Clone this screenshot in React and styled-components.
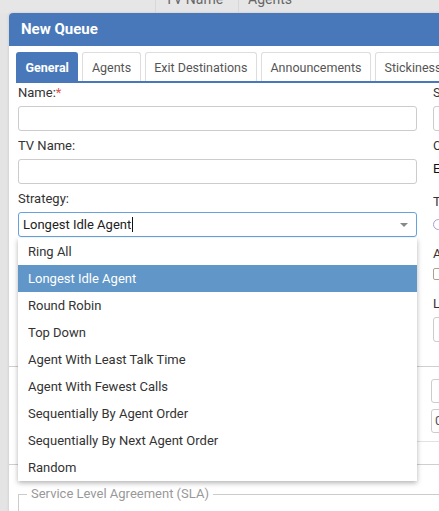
import React from "react";
import styled, { createGlobalStyle } from "styled-components";

const GlobalStyle = createGlobalStyle`
  html, body {
    margin: 0;
    padding: 0;
    background: #e4e4e4;
    overflow: hidden;
    font-family: Roboto, "Liberation Sans", Arial, sans-serif;
    font-size: 13px;
    color: #333;
  }
`;

const strategies = [
  "Ring All",
  "Longest Idle Agent",
  "Round Robin",
  "Top Down",
  "Agent With Least Talk Time",
  "Agent With Fewest Calls",
  "Sequentially By Agent Order",
  "Sequentially By Next Agent Order",
  "Random",
];

const tabs = ["General", "Agents", "Exit Destinations", "Announcements", "Stickiness"];

function App() {
  return (
    <>
      <GlobalStyle />
      <Backdrop>
        <HeadRow>
          <HeadCell $width={155} />
          <HeadCell $width={83}>TV Name</HeadCell>
          <HeadCell $width={200}>Agents</HeadCell>
        </HeadRow>
      </Backdrop>
      <Modal>
        <Header>New Queue</Header>
        <Body>
          <Tabs>
            {tabs.map((t, i) => (
              <Tab key={t} $active={i === 0}>
                {t}
              </Tab>
            ))}
          </Tabs>
          <FormGrid>
            <Column>
              <Field>
                <Label>
                  Name:<Required>*</Required>
                </Label>
                <Input />
              </Field>
              <Field>
                <Label>TV Name:</Label>
                <Input />
              </Field>
              <Field>
                <Label>Strategy:</Label>
                <SelectWrap>
                  <Select>
                    <span>Longest Idle Agent</span>
                    <Cursor />
                    <Caret />
                  </Select>
                  <Dropdown>
                    {strategies.map((s) => (
                      <Option key={s} $selected={s === "Longest Idle Agent"}>
                        {s}
                      </Option>
                    ))}
                  </Dropdown>
                </SelectWrap>
              </Field>
            </Column>
            <Column>
              <Field>
                <Label>Skill Group:</Label>
                <Input />
              </Field>
              <Field>
                <Label>Caller ID Name Prefix:</Label>
                <Value>Enabled</Value>
              </Field>
              <Field>
                <Label>Timeout Action:</Label>
                <RadioRow>
                  <Radio />
                  <span>Voicemail</span>
                </RadioRow>
              </Field>
              <Field>
                <Label>Auto Answer:</Label>
                <Checkbox />
              </Field>
              <Field>
                <Label>Language:</Label>
                <Input />
              </Field>
            </Column>
          </FormGrid>
          <Divider $mt={24} />
          <LowerSection>
            <div />
            <StackedInputs>
              <SmallInput />
              <SmallInput>0</SmallInput>
            </StackedInputs>
          </LowerSection>
          <Divider $mt={22} />
          <Fieldset>
            <legend>Service Level Agreement (SLA)</legend>
            <FieldsetInner />
          </Fieldset>
        </Body>
      </Modal>
    </>
  );
}

export default App;

const Backdrop = styled.div`
  height: 13px;
  overflow: hidden;
  background: #e6e6e6;
`;

const HeadRow = styled.div`
  display: flex;
  margin-top: -15px;
`;

const HeadCell = styled.div`
  width: ${(p) => p.$width}px;
  height: 28px;
  line-height: 28px;
  padding-left: 9px;
  box-sizing: border-box;
  border-left: 1px solid #d8d8d8;
  color: #666;
  font-size: 14px;

  &:first-child {
    border-left: none;
  }
`;

const Modal = styled.div`
  margin-left: 9px;
  width: 640px;
  background: #fff;
  border-radius: 4px 4px 0 0;
  box-shadow: 0 0 3px rgba(0, 0, 0, 0.15);
  min-height: 520px;
`;

const Header = styled.div`
  height: 33px;
  line-height: 32px;
  padding-left: 12px;
  background: #4878b9;
  color: #fff;
  font-weight: 700;
  font-size: 15px;
  border-radius: 4px 4px 0 0;
`;

const Body = styled.div`
  padding: 6px 9px 0 9px;
`;

const Tabs = styled.div`
  display: flex;
  gap: 4px;
  margin-left: -2px;
  height: 29px;
  border-bottom: 2px solid #4878b9;
`;

const Tab = styled.div`
  display: flex;
  align-items: center;
  padding: 0 8.5px;
  border: 1px solid #ddd;
  border-bottom: none;
  border-radius: 3px 3px 0 0;
  white-space: nowrap;
  font-size: 12.5px;
  color: ${(p) => (p.$active ? "#fff" : "#555")};
  background: ${(p) => (p.$active ? "#4878b9" : "#fff")};
  border-color: ${(p) => (p.$active ? "#4878b9" : "#ddd")};
  font-weight: ${(p) => (p.$active ? 700 : 400)};
`;

const FormGrid = styled.div`
  display: grid;
  grid-template-columns: 399px 1fr;
  column-gap: 16px;
  padding-top: 1px;
`;

const Column = styled.div`
  display: flex;
  flex-direction: column;
  gap: 6px;
`;

const Field = styled.div`
  display: flex;
  flex-direction: column;
`;

const Label = styled.div`
  line-height: 18px;
  margin-bottom: 4px;
  white-space: nowrap;
  color: #333;
`;

const Required = styled.span`
  color: #d9534f;
`;

const Input = styled.div`
  height: 25px;
  box-sizing: border-box;
  border: 1px solid #ccc;
  border-radius: 3px;
  background: #fff;
`;

const SelectWrap = styled.div`
  position: relative;
`;

const Select = styled.div`
  height: 25px;
  box-sizing: border-box;
  border: 1px solid #66a3dd;
  border-radius: 3px;
  display: flex;
  align-items: center;
  padding-left: 4px;
  font-size: 13px;
  color: #222;
`;

const Cursor = styled.span`
  width: 1px;
  height: 15px;
  background: #111;
  margin-left: 1px;
`;

const Caret = styled.span`
  margin-left: auto;
  margin-right: 8px;
  width: 0;
  height: 0;
  border-left: 4px solid transparent;
  border-right: 4px solid transparent;
  border-top: 4px solid #888;
`;

const Dropdown = styled.div`
  position: absolute;
  top: calc(100% + 1px);
  left: 0;
  right: 0;
  background: #fff;
  box-shadow: 0 2px 5px rgba(0, 0, 0, 0.3);
  z-index: 10;
`;

const Option = styled.div`
  height: 27px;
  line-height: 27px;
  padding-left: 10px;
  font-size: 13px;
  color: ${(p) => (p.$selected ? "#fff" : "#333")};
  background: ${(p) => (p.$selected ? "#6196c8" : "transparent")};
`;

const Value = styled.div`
  line-height: 18px;
  margin-top: 1px;
  margin-bottom: 9px;
  color: #111;
`;

const RadioRow = styled.div`
  display: flex;
  align-items: center;
  gap: 5px;
  height: 18px;
  margin-bottom: 6px;
`;

const Radio = styled.span`
  width: 11px;
  height: 11px;
  border-radius: 50%;
  border: 1px solid #a89bd8;
  box-sizing: border-box;
`;

const Checkbox = styled.span`
  width: 12px;
  height: 12px;
  margin-top: 1px;
  margin-bottom: 9px;
  border: 1px solid #b0a090;
  border-radius: 2px;
  box-sizing: border-box;
`;

const Divider = styled.div`
  height: 1px;
  background: #cfcfcf;
  margin: ${(p) => p.$mt ?? 22}px -9px 0 -9px;
`;

const LowerSection = styled.div`
  display: grid;
  grid-template-columns: 397px 1fr;
  column-gap: 16px;
  padding: 12px 0 8px;
  border-bottom: 1px solid #e2e2e2;
  margin: 0 -9px 0 0;
`;

const StackedInputs = styled.div`
  display: flex;
  flex-direction: column;
  gap: 6px;
`;

const SmallInput = styled.div`
  height: 24px;
  box-sizing: border-box;
  border: 1px solid #ccc;
  border-radius: 3px;
  padding-left: 3px;
  line-height: 22px;
  color: #555;
`;

const Fieldset = styled.fieldset`
  margin: 20px 0 0;
  padding: 0 8px;
  border: 1px solid #ccc;
  border-right: none;
  border-bottom: none;

  legend {
    padding: 0 4px;
    color: #999;
    font-size: 13px;
    line-height: 18px;
  }
`;

const FieldsetInner = styled.div`
  height: 40px;
`;
